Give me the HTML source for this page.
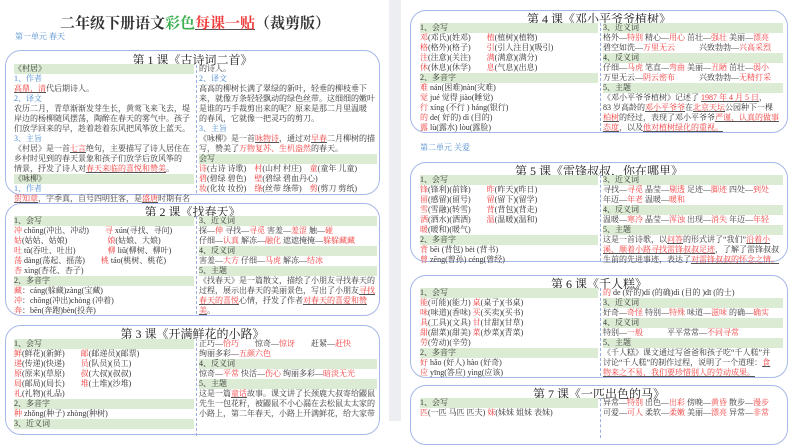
<!DOCTYPE html>
<html><head><meta charset="utf-8">
<style>
*{margin:0;padding:0;box-sizing:border-box}
body{width:800px;height:421px;overflow:hidden;background:#fff;position:relative;font-family:"Liberation Serif","Noto Serif CJK SC","Noto Sans CJK SC",serif;color:#333}
.gap{position:absolute;left:389px;top:0;width:12px;height:421px;background:#eceef2}
.box{position:absolute;border:1.5px solid #a7b8e6;border-radius:16px;background:#fff}
.tt{position:absolute;left:0;right:0;text-align:center;font-size:12px;color:#222;line-height:13px}
.col{position:absolute;font-size:8px;line-height:10px;white-space:nowrap;overflow:hidden}
.dash{position:absolute;width:0;border-left:1.5px dashed #9bb0e0}
.h{background:#dcebd3;color:#333}
.b{color:#4a8ad0}
.r{color:#f03a3a}
.u{text-decoration:underline;text-decoration-color:#555}
.unit{position:absolute;font-size:8px;color:#4a8ad0}
</style></head><body>
<div class="gap"></div>
<div style="position:absolute;left:0;width:390px;top:12px;text-align:center;font-size:15px;font-weight:bold;color:#333">二年级下册语文<span style="color:#3cb050">彩色</span><span class="r u">每课一贴</span>（裁剪版）</div>
<div class="unit" style="left:15px;top:31px">第一单元 春天</div>

<!-- lesson1 -->
<div class="box" style="left:5px;top:50px;width:375px;height:145px">
<div class="tt" style="top:3px">第 1 课《古诗词二首》</div>
<div class="dash" style="left:190px;top:14px;height:128px"></div>
<div class="col" style="left:8px;top:13px;width:180px">
<div class="h">《村居》</div><div class="b">1、作者</div><div><span class="r u">高鼎，清</span>代后期诗人。</div><div class="b">2、译文</div>
<div>农历二月，青草渐渐发芽生长，黄莺飞来飞去，堤</div><div>岸边的杨柳随风摆荡，陶醉在春天的雾气中。孩子</div><div>们放学回来的早，趁着趁着东风把风筝放上蓝天。</div>
<div class="b">3、主旨</div><div>《村居》是一首<span class="r u">七言</span>绝句，主要描写了诗人居住在</div><div>乡村时见到的春天景象和孩子们放学后放风筝的</div><div>情景，抒发了诗人对<span class="r u">春天来临的喜悦和赞美</span>。</div>
<div class="h">《咏柳》</div><div class="b">1、作者</div><div><span class="r u">贺知章</span>，字季真，自号四明狂客，是<span class="r u">盛唐</span>时期有名</div></div>
<div class="col" style="left:193px;top:13px;width:178px">
<div>的诗人。</div><div class="b">2、译文</div><div>高高的柳树长满了翠绿的新叶，轻垂的柳枝垂下</div><div>来，就像万条轻轻飘动的绿色丝带。这细细的嫩叶</div><div>是谁的巧手裁剪出来的呢？原来是那二月里温暖</div><div>的春风，它就像一把灵巧的剪刀。</div>
<div class="b">3、主旨</div><div>《咏柳》是一首<span class="r u">咏物诗</span>，通过对<span class="r u">早春</span>二月柳树的描</div><div>写，赞美了<span class="r">万物复苏、生机盎然</span>的春天。</div>
<div class="h">会写</div><div><span class="r">诗</span>(古诗 诗歌)　<span class="r">村</span>(山村 村庄)　<span class="r">童</span>(童年 儿童)</div><div><span class="r">碧</span>(碧绿 碧色)　<span class="r">壁</span>(碧绿 碧血丹心)</div><div><span class="r">妆</span>(化妆 妆扮)　<span class="r">绦</span>(丝带 绦带)　<span class="r">剪</span>(剪刀 剪纸)</div></div>
</div>

<!-- lesson2 -->
<div class="box" style="left:5px;top:203px;width:375px;height:113px">
<div class="tt" style="top:2px">第 2 课《找春天》</div>
<div class="dash" style="left:190px;top:12px;height:98px"></div>
<div class="col" style="left:8px;top:12px;width:180px">
<div class="h">1、会写</div><div><span class="r">冲</span> chōng(冲出、冲动)　　<span class="r">寻</span> xún(寻找、寻问)</div><div><span class="r">姑</span>(姑姑、姑娘)　　　　　<span class="r">娘</span>(姑娘、大娘)</div><div><span class="r">吐</span> tǔ(吞吐、吐出)　　　　<span class="r">柳</span> liǔ(柳树、柳叶)</div><div><span class="r">荡</span> dàng(荡起、摇荡)　　<span class="r">桃</span> táo(桃树、桃花)</div><div><span class="r">杏</span> xìng(杏花、杏子)</div>
<div class="h">2、多音字</div><div><span class="r">藏</span>：cáng(躲藏)zàng(宝藏)</div><div><span class="r">冲</span>：chōng(冲出)chòng (冲着)</div><div><span class="r">奔</span>：bēn(奔跑)bèn(投奔)</div></div>
<div class="col" style="left:193px;top:12px;width:178px">
<div class="h">3、近义词</div><div>探—<span class="r">伸</span> 寻找—<span class="r">寻觅</span> 害羞—<span class="r">羞涩</span> 触—<span class="r">碰</span></div><div>仔细—<span class="r">认真</span> 解冻—<span class="r">融化</span> 遮遮掩掩—<span class="r">躲躲藏藏</span></div>
<div class="h">4、反义词</div><div>害羞—<span class="r">大方</span> 仔细—<span class="r">马虎</span> 解冻—<span class="r">结冰</span></div>
<div class="h">5、主题</div><div>《找春天》是一篇散文，描绘了小朋友寻找春天的</div><div>过程，展示出春天的美丽景色，写出了小朋友<span class="r u">寻找</span></div><div><span class="r u">春天的喜悦</span>心情，抒发了作者<span class="r u">对春天的喜爱和赞</span></div><div><span class="r u">美</span>。</div></div>
</div>

<!-- lesson3 -->
<div class="box" style="left:5px;top:325px;width:375px;height:110px">
<div class="tt" style="top:2px">第 3 课《开满鲜花的小路》</div>
<div class="dash" style="left:190px;top:12px;height:98px"></div>
<div class="col" style="left:8px;top:13px;width:180px">
<div class="h">1、会写</div><div><span class="r">鲜</span>(鲜花)(新鲜)　　<span class="r">邮</span>(邮递员)(邮票)</div><div><span class="r">递</span>(传递)(快递)　　<span class="r">员</span>(队员)(员工)</div><div><span class="r">原</span>(原来)(草原)　　<span class="r">叔</span>(大叔)(叔叔)</div><div><span class="r">局</span>(邮局)(局长)　　<span class="r">堆</span>(土堆)(沙堆)</div><div><span class="r">礼</span>(礼物)(礼品)</div>
<div class="h">2、多音字</div><div><span class="r">种</span> zhǒng(种子) zhòng(种树)</div><div class="h">3、近义词</div></div>
<div class="col" style="left:193px;top:13px;width:178px">
<div>正巧—<span class="r">恰巧</span>　　惊奇—<span class="r">惊讶</span>　　赶紧—<span class="r">赶快</span></div><div>绚丽多彩—<span class="r">五颜六色</span></div>
<div class="h">4、反义词</div><div>惊奇—<span class="r">平常</span> 快活—<span class="r">伤心</span> 绚丽多彩—<span class="r">暗淡无光</span></div>
<div class="h">5、主题</div><div>这是一篇<span class="r u">童话</span>故事。课文讲了长颈鹿大叔寄给鼹鼠</div><div>先生一包花籽，被鼹鼠不小心漏在去松鼠太太家的</div><div>小路上，第二年春天，小路上开满鲜花，给大家带</div></div>
</div>

<!-- lesson4 -->
<div class="box" style="left:410px;top:10px;width:378px;height:123px">
<div class="tt" style="top:2px">第 4 课《邓小平爷爷植树》</div>
<div class="dash" style="left:189px;top:12px;height:108px"></div>
<div class="col" style="left:9px;top:12px;width:178px">
<div class="h">1、会写</div><div><span class="r">邓</span>(邓氏)(姓邓)　　<span class="r">植</span>(植树)(植物)</div><div><span class="r">格</span>(格外)(格子)　　<span class="r">引</span>(引人注目)(吸引)</div><div><span class="r">注</span>(注意)(关注)　　<span class="r">满</span>(满意)(满分)</div><div><span class="r">休</span>(休息)(休学)　　<span class="r">息</span>(气息)(出息)</div>
<div class="h">2、多音字</div><div><span class="r">难</span> nán(困难)nàn(灾难)</div><div><span class="r">觉</span> jué 觉得 jiào(睡觉)</div><div><span class="r">行</span> xíng (不行 ) háng(银行)</div><div><span class="r">的</span> de( 好的) dì (目的)</div><div><span class="r">露</span> lù(露水) lòu(露脸)</div></div>
<div class="col" style="left:192px;top:12px;width:180px">
<div class="h">3、近义词</div><div>格外—<span class="r">特别</span> 精心—<span class="r">用心</span> 茁壮—<span class="r">强壮</span> 美丽—<span class="r">漂亮</span></div><div>碧空如洗—<span class="r">万里无云</span>　　　兴致勃勃—<span class="r">兴高采烈</span></div>
<div class="h">4、反义词</div><div>仔细—<span class="r">马虎</span> 笔直—<span class="r">弯曲</span> 美丽—<span class="r">丑陋</span> 茁壮—<span class="r">弱小</span></div><div>万里无云—<span class="r">阴云密布</span>　　　兴致勃勃—<span class="r">无精打采</span></div>
<div class="h">5、主题</div><div>《邓小平爷爷植树》记述了 <span class="r u">1987 年 4 月 5 日</span>，</div><div>83 岁高龄的<span class="r u">邓小平爷爷</span>在<span class="r u">北京天坛</span>公园种下一棵</div><div><span class="r u">柏树</span>的经过，表现了邓小平爷爷<span class="r u">严谨、认真的做事</span></div><div><span class="r u">态度</span>，以及<span class="r u">他对植树绿化的重视。</span></div></div>
</div>
<div class="unit" style="left:420px;top:142px">第二单元 关爱</div>

<!-- lesson5 -->
<div class="box" style="left:410px;top:162px;width:378px;height:100px">
<div class="tt" style="top:2px">第 5 课《雷锋叔叔，你在哪里》</div>
<div class="dash" style="left:189px;top:12px;height:86px"></div>
<div class="col" style="left:9px;top:12px;width:178px">
<div class="h">1、会写</div><div><span class="r">锋</span>(锋利)(前锋)　　<span class="r">昨</span>(昨天)(昨日)</div><div><span class="r">留</span>(感留)(留号)　　<span class="r">留</span>(留下)(留学)</div><div><span class="r">雪</span>(雪融)(转雪)　　<span class="r">背</span>(背包)(背走)</div><div><span class="r">洒</span>(洒水)(洒洒)　　<span class="r">温</span>(温暖)(温和)</div><div><span class="r">暖</span>(暖和)(暖气)</div>
<div class="h">2、多音字</div><div><span class="r">背</span> bēi (背包) bèi (背书)</div><div><span class="r">曾</span> zēng(曾孙) céng(曾经)</div></div>
<div class="col" style="left:192px;top:12px;width:180px">
<div class="h">3、近义词</div><div>寻找—<span class="r">寻觅</span> 晶莹—<span class="r">剔透</span> 足迹—<span class="r">脚迹</span> 四处—<span class="r">到处</span></div><div>年迈—<span class="r">年老</span> 温暖—<span class="r">暖和</span></div>
<div class="h">4、反义词</div><div>温暖—<span class="r">寒冷</span> 晶莹—<span class="r">浑浊</span> 出现—<span class="r">消失</span> 年迈—<span class="r">年轻</span></div>
<div class="h">5、主题</div><div>这是一首诗歌，以<span class="r u">问答</span>的形式讲了“我们”<span class="r u">沿着小</span></div><div><span class="r u">溪、顺着小路寻找雷锋叔叔足迹</span>，了解了雷锋叔叔</div><div>生前的先进事迹，表达了<span class="r u">对雷锋叔叔的怀念之情。</span></div></div>
</div>

<!-- lesson6 -->
<div class="box" style="left:410px;top:275px;width:378px;height:103px">
<div class="tt" style="top:2px">第 6 课《千人糕》</div>
<div class="dash" style="left:189px;top:12px;height:88px"></div>
<div class="col" style="left:9px;top:12px;width:178px">
<div class="h">1、会写</div><div><span class="r">能</span>(可能)(能力) <span class="r">桌</span>(桌子)(书桌)</div><div><span class="r">味</span>(味道)(香味) <span class="r">买</span>(买卖)(买书)</div><div><span class="r">具</span>(工具)(文具) <span class="r">甘</span>(甘甜)(甘草)</div><div><span class="r">甜</span>(甜菜)(甜美) <span class="r">菜</span>(炒菜)(青菜)</div><div><span class="r">劳</span>(劳动)(辛劳)</div>
<div class="h">2、多音字</div><div><span class="r">好</span> hǎo (好人) hào (好奇)</div><div><span class="r">应</span> yīng(答应) yìng(应该)</div></div>
<div class="col" style="left:192px;top:12px;width:180px">
<div><span class="r">的</span> de (好的)dí (的确)dì (目的 )dī (的士)</div>
<div class="h">3、近义词</div><div>好奇—<span class="r">奇怪</span> 特别—<span class="r">特殊</span> 味道—<span class="r">滋味</span> 的确—<span class="r">确实</span></div>
<div class="h">4、反义词</div><div>特别—<span class="r">一般</span>　　　平平常常—<span class="r">不同寻常</span></div>
<div class="h">5、主题</div><div>《千人糕》课文通过写爸爸和孩子吃“千人糕”并</div><div>讨论“千人糕”的制作过程，说明了一个道理：<span class="r u">食</span></div><div><span class="r u">物来之不易，我们要珍惜别人的劳动成果。</span></div></div>
</div>

<!-- lesson7 -->
<div class="box" style="left:410px;top:385px;width:378px;height:60px">
<div class="tt" style="top:2px">第 7 课《一匹出色的马》</div>
<div class="dash" style="left:189px;top:12px;height:40px"></div>
<div class="col" style="left:9px;top:12px;width:178px">
<div class="h">1、会写</div><div><span class="r">匹</span>(一匹 马匹 匹夫) <span class="r">妹</span>(妹妹 姐妹 表妹)</div></div>
<div class="col" style="left:192px;top:12px;width:180px">
<div>异常—<span class="r">特别</span> 出色—<span class="r">出彩</span> 傍晚—<span class="r">黄昏</span> 散步—<span class="r">漫步</span></div><div>可爱—<span class="r">可人</span> 柔软—<span class="r">柔嫩</span> 美丽—<span class="r">漂亮</span> 异常—<span class="r">非常</span></div></div>
</div>
</body></html>
